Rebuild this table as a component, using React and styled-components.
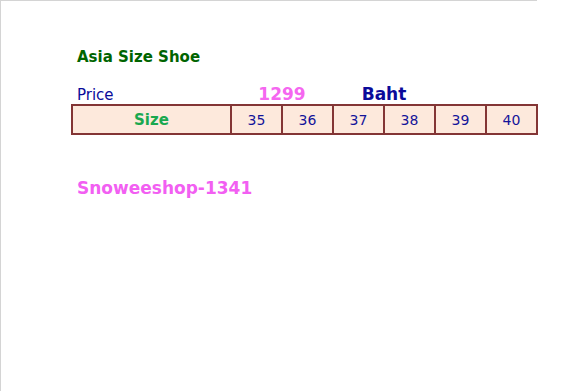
import React from 'react';
import styled, { createGlobalStyle } from 'styled-components';

const GlobalStyle = createGlobalStyle`
  html, body {
    margin: 0;
    padding: 0;
    background: #fff;
  }
`;

const Page = styled.div`
  width: 537px;
  height: 391px;
  box-sizing: border-box;
  border-top: 1px solid #d4d4d4;
  border-left: 1px solid #d4d4d4;
  padding: 46px 0 0 70px;
  font-family: "DejaVu Sans", Verdana, sans-serif;
`;

const Title = styled.div`
  color: #006400;
  font-size: 15px;
  font-weight: bold;
  padding-left: 6px;
  height: 20px;
  line-height: 20px;
`;

const SizeTable = styled.table`
  margin-top: 17px;
  border-collapse: collapse;
  width: 467px;
  table-layout: fixed;
`;

const HeadCell = styled.td`
  padding: 0 0 0 ${p => (p.$center ? 0 : 5)}px;
  height: 20px;
  vertical-align: bottom;
  text-align: ${p => (p.$center ? 'center' : 'left')};
  color: ${p => p.$color || '#0a0a9a'};
  font-size: ${p => p.$size || 15}px;
  font-weight: ${p => (p.$bold ? 'bold' : 'normal')};
`;

const Cell = styled.td`
  border: 2px solid #833535;
  background: #fde9dc;
  height: 26px;
  padding: 1px 0 0;
  text-align: center;
  color: ${p => (p.$label ? '#1aa84f' : '#14149a')};
  font-size: ${p => (p.$label ? 15 : 14)}px;
  font-weight: ${p => (p.$label ? 'bold' : 'normal')};
`;

const Shop = styled.div`
  margin-top: 43px;
  padding-left: 6px;
  color: #f25ff2;
  font-size: 17px;
  font-weight: bold;
`;

const sizes = [35, 36, 37, 38, 39, 40];

export default function App() {
  return (
    <>
      <GlobalStyle />
      <Page>
        <Title>Asia Size Shoe</Title>
        <SizeTable>
          <colgroup>
            <col style={{ width: 159 }} />
            {sizes.map(s => <col key={s} style={{ width: 51 }} />)}
          </colgroup>
          <tbody>
            <tr>
              <HeadCell>Price</HeadCell>
              <HeadCell colSpan={2} $center $bold $size={17} $color="#f567f0">1299</HeadCell>
              <HeadCell colSpan={2} $center $bold $size={17}>Baht</HeadCell>
              <HeadCell colSpan={2} />
            </tr>
            <tr>
              <Cell $label>Size</Cell>
              {sizes.map(s => <Cell key={s}>{s}</Cell>)}
            </tr>
          </tbody>
        </SizeTable>
        <Shop>Snoweeshop-1341</Shop>
      </Page>
    </>
  );
}
